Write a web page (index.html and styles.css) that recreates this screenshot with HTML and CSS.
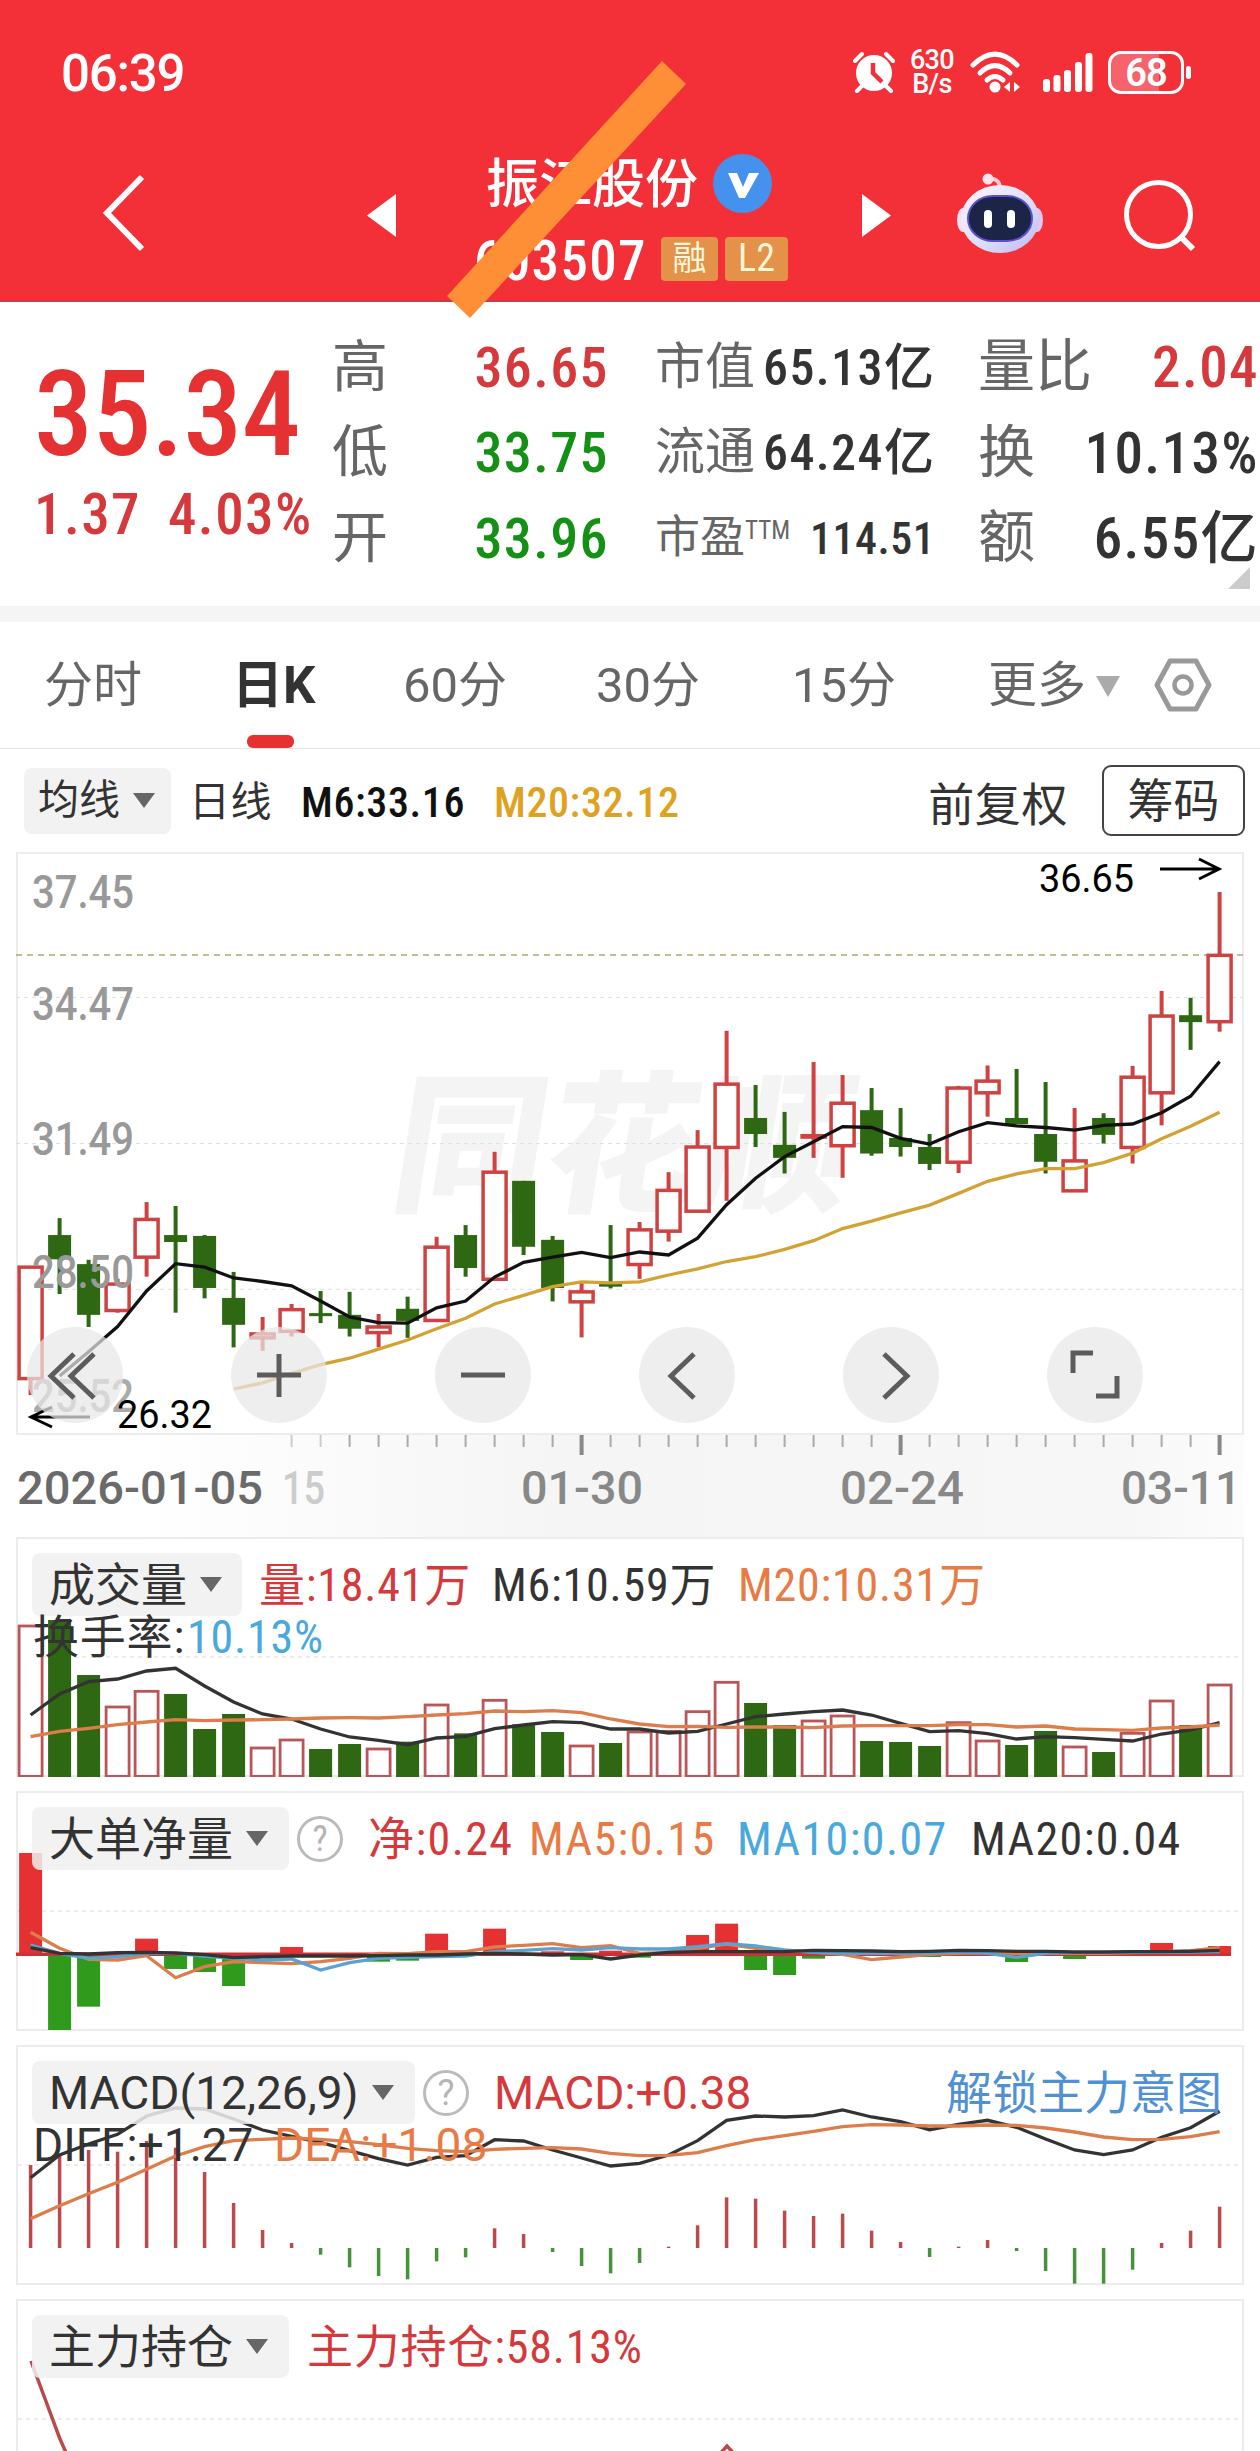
FILE: index.html
```html
<!DOCTYPE html>
<html lang="zh-CN">
<head>
  <meta charset="UTF-8">
  <meta name="viewport" content="width=device-width, initial-scale=1.0">
  <title>振江股份 603507</title>
  <link rel="stylesheet" href="styles.css">
</head>
<body>
  <header class="top">
    <!-- 状态栏 -->
    <div class="status">
      <span class="time">06:39</span>
      <div class="status-icons">
        <svg class="alarm" width="42" height="42" viewBox="0 0 42 42">
          <circle cx="21" cy="22" r="18" fill="#fff"/>
          <path d="M2 10 L9 3 M40 10 L33 3 M9 35 L4 40 M33 35 L38 40" stroke="#fff" stroke-width="4" stroke-linecap="round"/>
          <path d="M20 12 V22 L29 31" stroke="#f32f38" stroke-width="4.5" fill="none"/>
        </svg>
        <div class="speed"><span>630</span><span>B/s</span></div>
        <svg class="wifi" width="50" height="42" viewBox="0 0 50 42">
          <g fill="none" stroke="#fff" stroke-width="5" stroke-linecap="round">
            <path d="M3 14 Q25 -8 47 14"/><path d="M10 22 Q25 7 40 22"/><path d="M17 29 Q25 22 33 29"/>
          </g>
          <circle cx="25" cy="36" r="5.5" fill="#fff"/>
          <path d="M40 31 V41 L34 36 Z M44 31 V41 L50 36 Z" fill="#fff"/>
        </svg>
        <svg class="signal" width="50" height="42" viewBox="0 0 50 42">
          <g fill="#fff">
            <rect x="0" y="28" width="7" height="13" rx="3"/><rect x="10.5" y="24" width="7" height="17" rx="3"/>
            <rect x="21" y="19" width="7" height="22" rx="3"/><rect x="32" y="11" width="7" height="30" rx="3"/>
            <rect x="42.5" y="2" width="7" height="39" rx="3"/>
          </g>
        </svg>
        <div class="battery"><span>68</span></div>
      </div>
    </div>
    <!-- 导航 -->
    <nav class="nav">
      <svg class="back" width="44" height="78" viewBox="0 0 44 78"><path d="M40 3 L5 39 L40 75" fill="none" stroke="#fff" stroke-width="6"/></svg>
      <svg class="prev" width="29" height="43" viewBox="0 0 29 43"><path d="M29 0 V43 L0 21.5 Z" fill="#fff"/></svg>
      <div class="stock">
        <div class="stock-name"><span>振江股份</span>
          <svg width="59" height="59" viewBox="0 0 59 59"><circle cx="29.5" cy="29.5" r="29.5" fill="#4592ee"/><path d="M15 19 H24 L30 33 L36 19 H46 L32 44 H26 Z" fill="#fff"/></svg>
        </div>
        <div class="stock-code"><span>603507</span><i>融</i><i class="l2">L2</i></div>
      </div>
      <svg class="next" width="29" height="43" viewBox="0 0 29 43"><path d="M0 0 V43 L29 21.5 Z" fill="#fff"/></svg>
      <svg class="robot" width="86" height="80" viewBox="0 0 86 80">
        <defs><linearGradient id="shell" x1="0" y1="0" x2="1" y2="1"><stop offset="0" stop-color="#fff5fa"/><stop offset=".6" stop-color="#dcdcfa"/><stop offset="1" stop-color="#b9b6ee"/></linearGradient></defs>
        <path d="M30 6 Q43 4 43 16" fill="none" stroke="#ffc9d6" stroke-width="4"/>
        <circle cx="31" cy="6" r="5.5" fill="#ffe3ec"/>
        <ellipse cx="6" cy="47" rx="6" ry="12" fill="#f6dfee"/><ellipse cx="80" cy="47" rx="6" ry="12" fill="#e4c6ec"/>
        <ellipse cx="43" cy="46" rx="39" ry="34" fill="url(#shell)"/>
        <rect x="11" y="23" width="64" height="45" rx="25" fill="#1c2447" stroke="#5a50c8" stroke-width="2"/>
        <rect x="27" y="37" width="8" height="18" rx="4" fill="#fff"/><rect x="50" y="37" width="8" height="18" rx="4" fill="#fff"/>
      </svg>
      <svg class="search" width="72" height="72" viewBox="0 0 72 72"><circle cx="34.5" cy="34.5" r="32" fill="none" stroke="#fff" stroke-width="5"/><path d="M57 57 L69 69" stroke="#fff" stroke-width="6"/></svg>
    </nav>
    <svg class="slash" width="240" height="258" viewBox="0 0 240 258"><path d="M0 235 L215 0 L239 23 L23 257 Z" fill="#ff8f36"/></svg>
  </header>

  <!-- 报价 -->
  <section class="quote">
    <div class="price">
      <div class="now">35.34</div>
      <div class="change"><span>1.37</span><span>4.03%</span></div>
    </div>
    <dl class="col-a">
      <dt>高</dt><dd class="up">36.65</dd>
      <dt>低</dt><dd class="down">33.75</dd>
      <dt>开</dt><dd class="down">33.96</dd>
    </dl>
    <dl class="col-b">
      <dt>市值</dt><dd>65.13亿</dd>
      <dt>流通</dt><dd>64.24亿</dd>
      <dt class="small">市盈<sup>TTM</sup></dt><dd class="small">114.51</dd>
    </dl>
    <dl class="col-c">
      <dt>量比</dt><dd class="up">2.04</dd>
      <dt>换</dt><dd>10.13%</dd>
      <dt>额</dt><dd>6.55亿</dd>
    </dl>
    <span class="corner"></span>
  </section>

  <!-- 周期切换 -->
  <div class="tabs">
    <span>分时</span>
    <span class="active">日K</span>
    <span>60分</span>
    <span>30分</span>
    <span>15分</span>
    <span class="more">更多<i></i></span>
    <svg width="58" height="54" viewBox="0 0 58 54"><path d="M16 3 H42 L55 27 L42 51 H16 L3 27 Z" fill="none" stroke="#999" stroke-width="5" stroke-linejoin="round"/><circle cx="29" cy="27" r="8.5" fill="none" stroke="#999" stroke-width="4.5"/></svg>
  </div>

  <div class="toolbar">
    <button class="pill">均线<i></i></button>
    <span class="day">日线</span>
    <span class="m6">M6:33.16</span>
    <span class="m20">M20:32.12</span>
    <span class="adjust">前复权</span>
    <button class="chips">筹码</button>
  </div>

  <!-- K线 -->
  <section class="kline">
    <svg id="kline" width="1228" height="685" viewBox="0 0 1228 685"></svg>
    <div class="controls">
      <button><svg viewBox="0 0 96 96"><path d="M47 27 L24 49 L47 71 M67 27 L44 49 L67 71"/></svg></button>
      <button><svg viewBox="0 0 96 96"><path d="M26 48 H70 M48 27 V70"/></svg></button>
      <button><svg viewBox="0 0 96 96"><path d="M26 48 H70"/></svg></button>
      <button><svg viewBox="0 0 96 96"><path d="M55 27 L32 49 L55 71"/></svg></button>
      <button><svg viewBox="0 0 96 96"><path d="M41 27 L64 49 L41 71"/></svg></button>
      <button><svg viewBox="0 0 96 96"><path d="M46 26 H26 V46 M70 49 V69 H49"/></svg></button>
    </div>
  </section>

  <section class="panel volume">
    <svg id="volume" width="1228" height="240" viewBox="0 0 1228 240"></svg>
    <div class="legend">
      <button class="pill">成交量<i></i></button>
      <span class="up">量:18.41万</span><span>M6:10.59万</span><span class="orange">M20:10.31万</span>
    </div>
    <div class="legend second"><span>换手率:</span><span class="blue">10.13%</span></div>
  </section>

  <section class="panel netflow">
    <svg id="netflow" width="1228" height="240" viewBox="0 0 1228 240"></svg>
    <div class="legend">
      <button class="pill">大单净量<i></i></button><em>?</em>
      <span class="up">净:0.24</span><span class="orange">MA5:0.15</span><span class="blue">MA10:0.07</span><span>MA20:0.04</span>
    </div>
  </section>

  <section class="panel macd">
    <svg id="macd" width="1228" height="240" viewBox="0 0 1228 240"></svg>
    <div class="legend">
      <button class="pill">MACD(12,26,9)<i></i></button><em>?</em>
      <span class="up">MACD:+0.38</span><a>解锁主力意图</a>
    </div>
    <div class="legend second"><span>DIFF:+1.27</span><span class="orange">DEA:+1.08</span></div>
  </section>

  <section class="panel holding">
    <svg id="holding" width="1228" height="240" viewBox="0 0 1228 240"></svg>
    <div class="legend">
      <button class="pill">主力持仓<i></i></button>
      <span class="up">主力持仓:58.13%</span>
    </div>
  </section>

  <script src="chart.js"></script>
</body>
</html>
```

FILE: styles.css
```css
* {
  box-sizing: border-box;
  margin: 0;
  padding: 0;
}
body {
  width: 1260px;
  height: 2451px;
  overflow: hidden;
  background: #fff;
  color: #333;
  font-family: Roboto, "Noto Sans CJK SC", sans-serif;
  font-stretch: 87%;
  font-size: 46px;
  line-height: 1;
  white-space: nowrap;
}
button {
  font: inherit;
  color: inherit;
  border: none;
  background: none;
}
i, em {
  font-style: normal;
}
svg {
  display: block;
  flex: none;
}
.up { color: #d5393c; }
.down { color: #149014; }
.orange { color: #e87b45; }
.blue { color: #49a8dd; }

/* 顶部红色区域 */
.top {
  position: relative;
  height: 302px;
  background: #f32f38;
  border-bottom: 2px solid #c93d42;
  color: #fff;
}
.status {
  display: flex;
  justify-content: space-between;
  align-items: center;
  height: 144px;
  padding: 0 68px 0 61px;
}
.time {
  padding-top: 2px;
  font-size: 51px;
  font-weight: 500;
  font-stretch: 100%;
  letter-spacing: -1.2px;
}
.status-icons {
  display: flex;
  align-items: center;
}
.speed {
  display: flex;
  flex-direction: column;
  width: 60px;
  text-align: center;
  margin: 0 8px 0 7px;
  font-size: 27px;
  line-height: 24px;
  font-weight: 500;
  font-stretch: 100%;
  letter-spacing: -.6px;
}
.signal { margin: 0 15px 0 23px; }
.battery {
  position: relative;
  width: 76px;
  height: 43px;
  margin-right: 8px;
  border: 3px solid #fff;
  border-radius: 13px;
  background: linear-gradient(to right, rgba(255,255,255,.25) 68%, transparent 68%);
  text-align: center;
  font-size: 38px;
  line-height: 39px;
  font-weight: 600;
  font-stretch: 100%;
  letter-spacing: -1px;
}
.battery::after {
  content: "";
  position: absolute;
  right: -10px;
  top: 12px;
  width: 5px;
  height: 13px;
  border-radius: 3px;
  background: #fff;
}
.nav {
  display: flex;
  align-items: flex-start;
}
.back { margin: 30px 0 0 102px; }
.prev { margin: 50px 0 0 221px; }
.stock {
  width: 466px;
  padding-left: 78px;
}
.stock-name {
  display: flex;
  align-items: center;
  gap: 15px;
  height: 78px;
  padding-left: 12px;
  font-size: 53px;
  font-weight: 500;
}
.stock-name span { padding-top: 4px; }
.stock-code {
  display: flex;
  align-items: center;
  margin-top: 13px;
  font-size: 55px;
  font-weight: 500;
}
.stock-code span {
  width: 187px;
  height: 48px;
  line-height: 52px;
  letter-spacing: 1.3px;
}
.stock-code i {
  width: 57px;
  height: 44px;
  line-height: 43px;
  margin-right: 7px;
  border-radius: 4px;
  background: #e4914a;
  color: #fff7d8;
  text-align: center;
  font-size: 34px;
  font-weight: 400;
}
.stock-code .l2 {
  width: 63px;
  font-size: 38px;
}
.next { margin-top: 50px; }
.robot { margin: 29px 0 0 66px; }
.search { margin: 36px 0 0 81px; }
/* 斜向标记 */
.slash {
  position: absolute;
  z-index: 2;
  left: 447px;
  top: 61px;
}

/* 报价区 */
.quote {
  position: relative;
  display: flex;
  height: 304px;
  padding-left: 34px;
}
.price {
  width: 298px;
  color: #e53131;
}
.now {
  margin-top: 63px;
  font-size: 118px;
  line-height: 100px;
  font-weight: 500;
  letter-spacing: -.5px;
}
.change {
  display: flex;
  gap: 27px;
  margin-top: 21px;
  font-size: 57px;
  color: #d5393c;
  font-weight: 500;
  letter-spacing: 1.4px;
}
.quote dl {
  display: grid;
  grid-template-columns: auto 1fr;
  grid-auto-rows: 85.5px;
  align-items: center;
  padding-top: 22px;
  height: 280px;
  font-size: 56px;
}
.quote dt { color: #666; }
.quote dd {
  padding-top: 2px;
  text-align: right;
  font-weight: 500;
  letter-spacing: 1.4px;
}
.col-a { width: 277px; }
.quote .col-b {
  grid-template-columns: 108px 1fr;
  width: 279px;
  margin-left: 46px;
  font-size: 50px;
}
.quote .col-c {
  grid-template-columns: 60px 1fr;
  width: 281px;
  margin-left: 44px;
  font-size: 57px;
}
.quote .small { font-size: 45px; }
.quote dd.small {
  font-size: 44px;
  letter-spacing: .5px;
}
.quote sup {
  font-size: 25px;
  vertical-align: 14px;
}
.corner {
  position: absolute;
  right: 10px;
  bottom: 17px;
  border-left: 22px solid transparent;
  border-bottom: 22px solid #ccc;
}

/* 周期 */
.tabs {
  display: grid;
  grid-template-columns: 188px 171px 193px 196px 196px 166px auto;
  align-items: center;
  height: 143px;
  padding-left: 44px;
  border-top: 16px solid #f5f5f5;
  border-bottom: 1px solid #e6e6e6;
  font-size: 49px;
  font-stretch: 100%;
  color: #666;
}
.tabs .active {
  position: relative;
  color: #333;
  font-size: 51px;
  font-weight: 700;
}
.tabs .active::after {
  content: "";
  position: absolute;
  left: 15px;
  bottom: -37px;
  width: 47px;
  height: 13px;
  border-radius: 6px;
  background: #e53131;
}
.tabs i, .pill i {
  display: inline-block;
  border: 12.5px solid transparent;
  border-top: 21px solid #aaa;
  border-bottom: none;
  margin: 0 0 5px 10px;
}
.pill i {
  border-width: 15px 11px 0;
  border-top-color: #666;
}
.pill {
  display: inline-flex;
  align-items: center;
  height: 63px;
  padding-left: 17px;
  border-radius: 8px;
  background: rgba(240,240,240,.85);
}
.pill i { margin: 0 0 0 13px; }

.toolbar {
  display: flex;
  align-items: center;
  height: 103px;
  padding-left: 24px;
  font-size: 42px;
}
.toolbar .pill {
  width: 147px;
  height: 66px;
  padding-left: 14px;
  font-size: 41px;
}
.toolbar span {
  padding-top: 4px;
  font-weight: 500;
  letter-spacing: .6px;
}
.toolbar .day {
  width: 112px;
  margin-left: 18px;
  font-size: 41px;
  font-weight: 400;
}
.toolbar .m6 {
  width: 193px;
  color: #111;
}
.toolbar .m20 { color: #dfa21f; }
.toolbar .adjust {
  margin-left: auto;
  margin-right: 34px;
  padding-top: 8px;
  font-size: 46px;
  font-weight: 400;
}
.chips {
  width: 143px;
  height: 71px;
  margin-right: 15px;
  border: 2px solid #444;
  border-radius: 9px;
  font-size: 46px;
}

/* K线图 */
.kline {
  position: relative;
  height: 685px;
  padding-left: 16px;
}
.kline text { font-stretch: 100%; }
.controls {
  position: absolute;
  left: 27px;
  top: 475px;
  display: flex;
  gap: 108px;
}
.controls button {
  width: 96px;
  height: 96px;
  border-radius: 50%;
  background: rgba(232,232,232,.72);
}
.controls path {
  fill: none;
  stroke: #5c5c5c;
  stroke-width: 5;
}

/* 指标面板 */
.panel {
  position: relative;
  width: 1228px;
  height: 240px;
  margin: 0 0 14px 16px;
}
.panel > svg {
  position: absolute;
  left: 0;
  top: 0;
}
.legend {
  position: relative;
  display: grid;
  align-items: center;
  padding: 16px 0 0 16px;
  grid-auto-rows: 63px;
}
.legend span { letter-spacing: .8px; }
.legend.second {
  padding: 1px 0 0 17px;
  grid-auto-rows: 40px;
}
.legend em {
  width: 46px;
  height: 46px;
  border: 3px solid #bbb;
  border-radius: 50%;
  color: #b5b5b5;
  font-size: 36px;
  line-height: 41px;
  text-align: center;
}
.legend a { color: #5091d6; }
.volume .legend { grid-template-columns: 227px 233px 246px auto; }
.volume .pill { width: 210px; }
.volume .second { grid-template-columns: 154px auto; }
.netflow .legend { grid-template-columns: 265px 71px 161px 208px 234px auto; }
.netflow span { letter-spacing: 1.4px; }
.netflow .pill { width: 257px; }
.macd .legend {
  grid-template-columns: 391px 71px 452px auto;
  font-stretch: 100%;
}
.macd span { letter-spacing: 0; }
.macd .pill { width: 383px; }
.macd .second { grid-template-columns: 241px auto; }
.holding .legend { grid-template-columns: 275px auto; }
.holding .pill { width: 257px; }
```

FILE: chart.js
```javascript
const GREEN = '#2f6812';
const RED = '#cf4242';
const STEP = 29;
const X0 = 14.6;

const x = i => X0 + STEP * i;

function add(svg, tag, attrs, text) {
  const el = document.createElementNS('http://www.w3.org/2000/svg', tag);
  for (const k in attrs) el.setAttribute(k, attrs[k]);
  if (text) el.textContent = text;
  svg.appendChild(el);
  return el;
}
function line(svg, x1, y1, x2, y2, color, w, dash) {
  add(svg, 'line', { x1, y1, x2, y2, stroke: color, 'stroke-width': w || 1, 'stroke-dasharray': dash || 'none' });
}
function curve(svg, data, y, color, start, w) {
  const pts = data.map((v, i) => x(i + (start || 0)) + ',' + y(v).toFixed(1)).join(' ');
  add(svg, 'polyline', { points: pts, fill: 'none', stroke: color, 'stroke-width': w || 3.3 });
}
function label(svg, text, left, base, width, color, size, weight) {
  add(svg, 'text', { x: left, y: base, textLength: width, lengthAdjust: 'spacingAndGlyphs', fill: color, 'font-size': size || 46, 'font-weight': weight || 500 }, text);
}
function frame(svg, mid) {
  add(svg, 'rect', { x: 1, y: 1, width: 1226, height: 238, fill: 'none', stroke: '#ececec', 'stroke-width': 2 });
  line(svg, 2, mid, 1226, mid, '#e6e6e6', 1.5, '4 4');
}

// ---------- K线 ----------
// 涨跌, 最高, 实体上沿, 实体下沿, 最低 (绘图单位)
const candles = [
  [1,985,985,1242,1280],[0,872,911,967,1047],[0,968,978,1095,1123],[1,1012,1024,1085,1090],[1,835,875,962,1007],
  [0,844,911,927,1090],[0,911,913,1033,1057],[0,996,1056,1118,1170],[1,1100,1139,1148,1178],[1,1070,1083,1133,1145],
  [0,1040,1091,1098,1114],[0,1042,1095,1127,1145],[1,1093,1123,1136,1170],[0,1053,1081,1109,1148],[1,915,939,1108,1108],
  [0,888,911,987,1007],[1,719,766,1013,1016],[0,786,786,938,957],[0,913,922,1033,1064],[1,1020,1042,1065,1147],
  [0,888,1024,1030,1034],[1,881,899,979,1012],[1,766,808,902,926],[1,669,708,856,856],[1,440,563,709,832],
  [0,565,641,678,708],[0,627,703,733,769],[1,512,682,685,733],[1,542,607,705,779],[0,572,623,723,728],
  [0,618,687,708,730],[0,678,708,747,761],[1,567,572,743,768],[1,520,556,583,638],[0,528,641,655,655],
  [0,558,678,742,769],[1,618,740,809,809],[0,630,641,680,700],[1,521,547,709,746],[1,348,406,583,658],
  [0,364,404,420,484],[1,120,266,419,442]
];
const ma6 = [1236,1180,1122,1040,977,985,1010,1018,1028,1063,1100,1113,1114,1079,1063,1008,974,962,951,963,950,957,918,841,780,730,696,661,663,688,701,673,652,659,663,669,658,655,629,591,511];
const ma20 = [1266,1252,1230,1210,1195,1174,1153,1127,1103,1070,1050,1030,1019,1021,1019,1003,989,972,961,944,924,896,879,860,842,815,787,770,758,758,744,722,689,660,628];

function drawKline() {
  const svg = document.getElementById('kline');
  const y = v => v / 2.306 - 12;

  // 日期轴底色
  const defs = add(svg, 'defs', {});
  const g = add(defs, 'linearGradient', { id: 'axis' });
  add(g, 'stop', { offset: .1, 'stop-color': '#fff' });
  add(g, 'stop', { offset: .45, 'stop-color': '#f5f5f5' });
  add(g, 'stop', { offset: .9, 'stop-color': '#f7f7f7' });
  add(g, 'stop', { offset: 1, 'stop-color': '#fcfcfc' });
  add(svg, 'rect', { x: 0, y: 582, width: 1228, height: 103, fill: 'url(#axis)' });

  // 水印
  add(svg, 'text', { x: 426, y: 348, 'font-size': 152, 'font-weight': 900, fill: '#f4f4f4', textLength: 458, transform: 'skewX(-9)', 'font-family': 'Noto Sans CJK SC' }, '同花顺');

  add(svg, 'rect', { x: 1, y: 1, width: 1226, height: 581, fill: 'none', stroke: '#ececec', 'stroke-width': 2 });
  [363, 700, 1036].forEach(v => line(svg, 0, y(v), 1227, y(v), '#dedede', 1, '4 4'));
  line(svg, 0, y(265), 1227, y(265), '#b0a777', 1.5, '6 5');

  candles.forEach(([up, hi, top, bot, lo], i) => {
    const c = up ? RED : GREEN;
    if (up) {
      if (hi < top) line(svg, x(i), y(hi), x(i), y(top), c, 4);
      if (lo > bot) line(svg, x(i), y(bot), x(i), y(lo), c, 4);
      add(svg, 'rect', { x: x(i) - 11.5, y: y(top), width: 23, height: y(bot) - y(top), fill: '#fff', stroke: c, 'stroke-width': 3.5 });
    } else {
      line(svg, x(i), y(hi), x(i), y(lo), c, 4);
      add(svg, 'rect', { x: x(i) - 11.5, y: y(top), width: 23, height: y(bot) - y(top), fill: c });
    }
  });
  curve(svg, ma20, y, '#d3a234', 7);
  curve(svg, ma6, y, '#111', 1);

  label(svg, '37.45', 16, 56, 102, '#999');
  label(svg, '34.47', 16, 168, 102, '#999');
  label(svg, '31.49', 16, 303, 102, '#999');
  label(svg, '28.50', 16, 436, 102, '#999');
  label(svg, '25.52', 16, 560, 102, '#aaa');

  label(svg, '36.65', 1023, 40, 95, '#000', 39, 400);
  label(svg, '26.32', 101, 576, 95, '#000', 39, 400);
  add(svg, 'path', { d: 'M1144 17 H1203 M1183 7 L1203 17 L1183 27 M74 565 H15 M36 555 L15 565 L36 575', fill: 'none', stroke: '#000', 'stroke-width': 3 });

  for (let i = 9; i < 42; i++) {
    const major = i === 19 || i === 30 || i === 41;
    line(svg, x(i), 583, x(i), major ? 603 : 595, major ? '#888' : i < 11 ? '#ccc' : '#aaa', major ? 4 : 2);
  }
  label(svg, '2026-01-05', 1, 652, 246, '#6a6a6a');
  label(svg, '15', 266, 652, 43, '#ccc');
  label(svg, '01-30', 505, 652, 122, '#888');
  label(svg, '02-24', 824, 652, 124, '#888');
  label(svg, '03-11', 1105, 652, 120, '#888');
}

// ---------- 成交量 ----------
const vol = [288,270,435,531,484,492,597,552,654,630,657,642,657,635,525,610,511,583,606,648,639,606,604,545,457,519,585,573,558,633,636,648,578,633,645,603,651,666,610,513,585,465];
const volM6 = [555,492,455,447,423,415,468,516,552,567,597,621,631,644,624,619,596,585,575,578,597,597,609,604,582,560,552,545,540,555,580,605,602,611,627,620,623,628,633,612,600,578];
const volM20 = [620,604,595,584,576,569,572,570,569,567,564,563,564,560,555,551,543,545,542,548,567,582,590,589,592,591,591,593,588,587,587,587,584,584,591,588,597,599,601,594,591,585];

function drawVolume() {
  const svg = document.getElementById('volume');
  const y = v => v / 3 - 7;
  frame(svg, y(381));
  vol.forEach((v, i) => {
    if (candles[i][0]) {
      add(svg, 'rect', { x: x(i) - 11.5, y: y(v), width: 23, height: y(739) - y(v), fill: '#fff', stroke: '#b9565a', 'stroke-width': 2.8 });
    } else {
      add(svg, 'rect', { x: x(i) - 11.5, y: y(v), width: 23, height: y(741) - y(v), fill: GREEN });
    }
  });
  curve(svg, volM6, y, '#333');
  curve(svg, volM20, y, '#dd7d4c');
}

// ---------- 大单净量 ----------
const net = { 0:219, 1:750, 2:680, 4:476, 5:567, 6:576, 7:618, 9:501, 12:545, 13:542, 14:461, 16:446, 18:514, 19:540, 20:512, 21:533, 23:465, 24:431, 25:570, 26:585, 27:536, 31:531, 34:546, 36:537, 39:489, 40:514, 41:498 };
const net5 = [457,505,538,540,527,593,560,545,548,551,545,535,520,521,515,515,501,496,491,503,497,520,517,505,492,505,512,516,523,539,531,523,520,518,520,520,520,520,518,515,512,503];
const net10 = [495,520,535,530,520,520,528,535,540,537,570,548,535,532,530,528,515,511,506,510,503,507,507,500,491,498,510,517,520,520,520,519,516,520,532,520,518,518,517,517,516,515];
const net20 = [503,520,522,518,517,519,524,533,530,528,528,528,527,525,525,522,520,522,525,524,537,525,517,515,515,515,515,511,512,513,515,514,511,512,514,514,516,516,515,515,514,511];

function drawNet() {
  const svg = document.getElementById('netflow');
  const y = v => v / 3 - 11;
  frame(svg, y(393));
  for (const i in net) {
    const up = net[i] < 523;
    add(svg, 'rect', { x: x(+i) - 11.5, y: y(Math.min(net[i], 523)), width: 23, height: Math.abs(net[i] - 523) / 3, fill: up ? '#e53131' : '#2f9a1c' });
  }
  line(svg, 0, y(523), 1215, y(523), '#c93237', 3.5);
  curve(svg, net5, y, '#dd7d4c');
  curve(svg, net10, y, '#5aa3d0');
  curve(svg, net20, y, '#333');
}

// ---------- MACD ----------
const bars = [375,345,330,335,303,323,396,489,570,609,644,682,708,718,664,652,565,582,636,678,700,669,620,556,472,476,512,528,521,572,606,651,620,600,633,693,731,731,689,609,572,500];
const diff = [413,345,312,283,228,204,207,237,270,289,307,332,356,375,352,347,299,303,330,354,378,370,345,302,241,228,231,227,210,231,245,269,253,241,262,297,330,344,330,292,263,214];
const dea = [536,497,461,427,388,348,320,302,298,294,298,305,314,325,332,335,328,325,323,327,340,347,346,338,317,299,287,274,260,254,255,258,258,255,256,264,276,291,299,298,290,275];

function drawMacd() {
  const svg = document.getElementById('macd');
  const y = v => v / 3 - 5;
  frame(svg, y(375));
  bars.forEach((v, i) => line(svg, x(i), y(v), x(i), y(624), v < 624 ? '#bd494c' : '#46923a', 3.5));
  curve(svg, diff, y, '#333');
  curve(svg, dea, y, '#dd7d4c');
}

// ---------- 主力持仓 ----------
function drawHolding() {
  const svg = document.getElementById('holding');
  frame(svg, 120);
  add(svg, 'path', { d: 'M15 62 L44 140 L64 185 M690 170 L711 147 L732 170', fill: 'none', stroke: '#b94a4a', 'stroke-width': 3.5 });
}

drawKline();
drawVolume();
drawNet();
drawMacd();
drawHolding();
```
